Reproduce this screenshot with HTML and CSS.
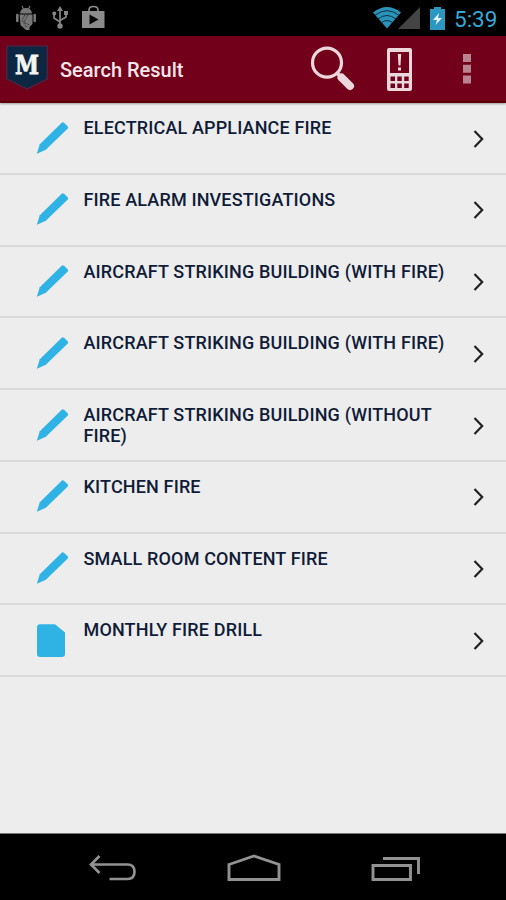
FILE: index.html
```html
<!DOCTYPE html>
<html lang="en">
<head>
  <meta charset="UTF-8">
  <title>Search Result</title>
  <link rel="stylesheet" href="styles.css">
</head>
<body>

  <!-- shared icons -->
  <svg class="sprite">
    <symbol id="pencil" viewBox="0 0 34 34">
      <path d="M.8 31.800L3.800 22.300L25.700 .8Q27 -.2 28.300 1L31.600 4.200Q32.600 5.500 31.500 6.700L9.800 27.700Z" fill="#2fb2e4"/>
    </symbol>
    <symbol id="page" viewBox="0 0 34 34">
      <path d="M4 .2H19L29 8.600V30Q29 33 26 33H4Q1 33 1 30V3.200Q1 .2 4 .2Z" fill="#2fb2e4"/>
    </symbol>
    <symbol id="arrow" viewBox="0 0 12 20">
      <path d="M1.500 2L9.200 10L1.500 18" fill="none" stroke="#222" stroke-width="2.200"/>
    </symbol>
  </svg>

  <div class="status-bar">
    <div class="status-left">
      <svg width="22" height="26" viewBox="0 0 22 26">
        <path d="M7 1L8.500 4M15 1L13.500 4" stroke="#777" stroke-width="1.200"/>
        <path d="M5 8.500Q5.500 3 11 3T17 8.500Z" fill="#777"/>
        <path d="M4.500 9.500H17.500V19L14.500 22V25H11L5.500 20Z" fill="#777"/>
        <path d="M2.300 10V16M19.700 10V16" stroke="#777" stroke-width="2.600" stroke-linecap="round"/>
        <path d="M10 10L7 15L12 23M13 10L9 17L14 20" fill="none" stroke="#333" stroke-width="1" stroke-dasharray="2 1"/>
      </svg>
      <svg width="16" height="24" viewBox="0 0 16 24">
        <path d="M8 3V20M2 8V12L8 16M14 7V11L8 14.500" fill="none" stroke="#858585" stroke-width="1.700"/>
        <path d="M8 0L11 5H5Z" fill="#858585"/>
        <circle cx="8" cy="20" r="2.700" fill="#858585"/>
        <circle cx="2.300" cy="7.500" r="2" fill="#858585"/>
        <path d="M12 5H16V9H12Z" fill="#858585"/>
      </svg>
      <svg width="24" height="24" viewBox="0 0 24 24">
        <path d="M7 6V5Q7 1.500 11.500 1.500T16 5V6" fill="none" stroke="#8b8b8b" stroke-width="1.700"/>
        <path d="M0 6H22.500V23H0Z" fill="#8b8b8b"/>
        <path d="M7.500 9.500L16.500 14.500L7.500 19.500Z" fill="#050505"/>
      </svg>
    </div>
    <div class="status-right">
      <svg width="28" height="22" viewBox="0 0 28 22">
        <path d="M0 5.500Q14 -5.500 28 5.500L14 21.500Z" fill="#2b93b9"/>
        <path d="M2 8.300Q14 -1 26 8.300M5 12Q14 5 23 12M8.300 15.700Q14 11.500 19.700 15.700" fill="none" stroke="#07303e" stroke-width="1"/>
      </svg>
      <svg class="signal" width="22" height="22" viewBox="0 0 22 22">
        <path d="M22 0V22H0Z" fill="#444"/>
      </svg>
      <svg class="battery" width="15" height="23" viewBox="0 0 15 23">
        <path d="M4 0H11V2H15V23H0V2H4Z" fill="#2c98c0"/>
        <path d="M9 6L3 13H7L5.500 18L12 11H8Z" fill="#e5f4fa"/>
      </svg>
      <span class="clock">5:39</span>
    </div>
  </div>

  <div class="top-bar">
    <svg class="logo" width="42" height="46" viewBox="0 0 42 46">
      <path d="M.700 1H41.300V34L21 44L.700 34Z" fill="#0b2742" stroke="#4b2340" stroke-width="1.500"/>
      <text class="logo-letter" x="21" y="28.500" text-anchor="middle" textLength="24" lengthAdjust="spacingAndGlyphs">M</text>
    </svg>
    <h1>Search Result</h1>
    <div class="actions">
      <svg width="46" height="46" viewBox="0 0 46 46">
        <circle cx="17" cy="16.700" r="14.500" fill="none" stroke="#ecd8dc" stroke-width="3.200"/>
        <path d="M27 27L31 31" stroke="#ecd8dc" stroke-width="3.500"/>
        <path d="M31.500 31.500L40 40" stroke="#ecd8dc" stroke-width="8" stroke-linecap="round"/>
      </svg>
      <svg class="phone" width="25" height="43" viewBox="0 0 25 43">
        <path fill-rule="evenodd" fill="#ecd8dc" d="M2 0H23Q25 0 25 2V41Q25 43 23 43H2Q0 43 0 41V2Q0 0 2 0ZM3 4V25H22V4ZM3.500 28.500V33H8V28.500ZM10.300 28.500V33H14.800V28.500ZM17.200 28.500V33H21.700V28.500ZM3.500 35.500V40H8V35.500ZM10.300 35.500V40H14.800V35.500ZM17.200 35.500V40H21.700V35.500Z"/>
        <path d="M10.800 6H14.200L13.500 17.500H11.500ZM11 19.500H14V22.500H11Z" fill="#ecd8dc"/>
      </svg>
      <svg class="more" width="8" height="30" viewBox="0 0 8 30">
        <path d="M0 0H8V8H0ZM0 10.700H8V18.700H0ZM0 21.500H8V29.500H0Z" fill="#b98490"/>
      </svg>
    </div>
  </div>

  <div class="results">
    <div class="result">
      <svg class="icon"><use href="#pencil"/></svg>
      <p>ELECTRICAL APPLIANCE FIRE</p>
      <svg class="arrow"><use href="#arrow"/></svg>
    </div>
    <div class="result">
      <svg class="icon"><use href="#pencil"/></svg>
      <p>FIRE ALARM INVESTIGATIONS</p>
      <svg class="arrow"><use href="#arrow"/></svg>
    </div>
    <div class="result">
      <svg class="icon"><use href="#pencil"/></svg>
      <p>AIRCRAFT STRIKING BUILDING (WITH FIRE)</p>
      <svg class="arrow"><use href="#arrow"/></svg>
    </div>
    <div class="result">
      <svg class="icon"><use href="#pencil"/></svg>
      <p>AIRCRAFT STRIKING BUILDING (WITH FIRE)</p>
      <svg class="arrow"><use href="#arrow"/></svg>
    </div>
    <div class="result">
      <svg class="icon"><use href="#pencil"/></svg>
      <p>AIRCRAFT STRIKING BUILDING (WITHOUT FIRE)</p>
      <svg class="arrow"><use href="#arrow"/></svg>
    </div>
    <div class="result">
      <svg class="icon"><use href="#pencil"/></svg>
      <p>KITCHEN FIRE</p>
      <svg class="arrow"><use href="#arrow"/></svg>
    </div>
    <div class="result">
      <svg class="icon"><use href="#pencil"/></svg>
      <p>SMALL ROOM CONTENT FIRE</p>
      <svg class="arrow"><use href="#arrow"/></svg>
    </div>
    <div class="result">
      <svg class="icon"><use href="#page"/></svg>
      <p>MONTHLY FIRE DRILL</p>
      <svg class="arrow"><use href="#arrow"/></svg>
    </div>
  </div>

  <div class="nav">
    <svg width="48" height="28" viewBox="0 0 48 28">
      <path d="M10.500 2L2 10.500L10.500 19M2 10.500H38.500Q45.500 10.500 45.500 17.700T38.500 25H20.500" fill="none" stroke="#929292" stroke-width="2.700"/>
    </svg>
    <svg width="54" height="28" viewBox="0 0 54 28">
      <path d="M2 10.500L27 2L52 10.500V25.500H2Z" fill="none" stroke="#929292" stroke-width="2.900"/>
    </svg>
    <svg width="50" height="28" viewBox="0 0 50 28">
      <path d="M2 11.500H39.500V25.500H2ZM12 4.500H47.500V20" fill="none" stroke="#929292" stroke-width="2.900"/>
    </svg>
  </div>

</body>
</html>
```

FILE: styles.css
```css
* { box-sizing: border-box; }

body {
  margin: 0;
  height: 900px;
  display: flex;
  flex-direction: column;
  overflow: hidden;
  font-family: Roboto, "Liberation Sans", sans-serif;
  background: #ededed;
}

svg {
  display: block;
  flex-shrink: 0;
}

.sprite {
  display: none;
}

.status-bar {
  height: 36px;
  flex-shrink: 0;
  display: flex;
  justify-content: space-between;
  background: #000;
  padding: 0 7px 0 15px;
}

.status-left,
.status-right {
  display: flex;
  align-items: center;
}

.status-left {
  gap: 15px;
}

.status-left svg:last-child {
  margin-left: -1px;
  margin-top: -3px;
}

.signal {
  margin-left: -3px;
}

.battery {
  margin-left: 10px;
}

.clock {
  width: 45px;
  margin: 2px 0 0 9px;
  font-size: 22.5px;
  color: #35a9d6;
  white-space: nowrap;
}

.top-bar {
  height: 66.5px;
  flex-shrink: 0;
  display: flex;
  align-items: center;
  padding: 0 35px 0 6px;
  background: #73001a;
  border-bottom: 2px solid #5c0008;
  box-shadow: 0 1px 2px rgba(0,0,0,0.35);
}

.logo {
  margin-top: 0;
}

.logo-letter {
  font-family: "DejaVu Serif", serif;
  font-size: 26px;
  font-weight: bold;
  fill: #f6f4ee;
  stroke: #f6f4ee;
  stroke-width: 0.8px;
}

h1 {
  margin: 4px 0 0 12px;
  font-size: 20px;
  font-weight: 500;
  color: #f4e6e9;
}

.actions {
  margin: 2px 0 0 auto;
  display: flex;
  align-items: center;
}

.phone {
  margin-left: 31px;
}

.more {
  margin-left: 51px;
}

.results {
  flex: 1;
  padding-top: 0.5px;
}

.result {
  height: 71.75px;
  display: flex;
  padding: 0 21px 0 36px;
  border-bottom: 2px solid #dadada;
}

.result p {
  width: 370px;
  margin: 14px 0 0 13.5px;
  font-size: 18px;
  font-weight: 500;
  line-height: 21px;
  letter-spacing: 0.15px;
  color: #101c38;
}

.icon {
  width: 34px;
  height: 34px;
  margin-top: 18.5px;
}

.arrow {
  width: 12px;
  height: 20px;
  margin: 25.5px 0 0 auto;
}

.nav {
  height: 67px;
  flex-shrink: 0;
  display: flex;
  justify-content: space-between;
  align-items: center;
  padding: 2px 85px 0 89px;
  background: #000;
  border-top: 1px solid #777;
}
```
